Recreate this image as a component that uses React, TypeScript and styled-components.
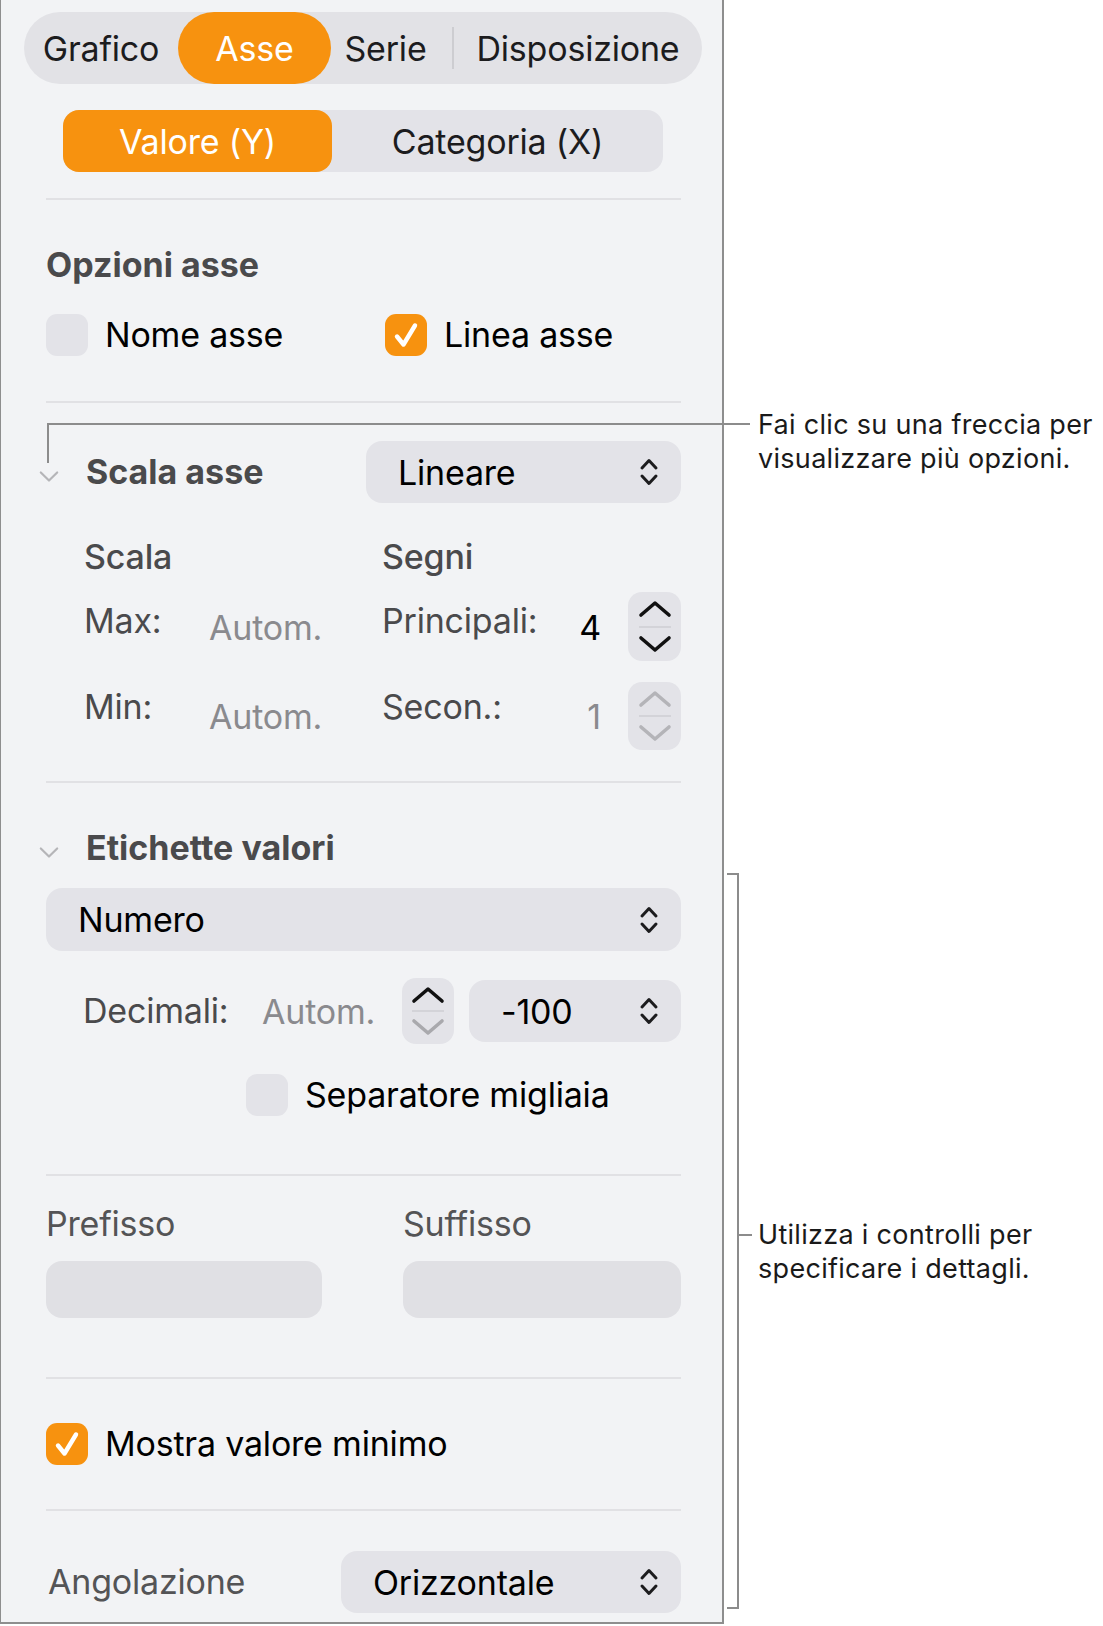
import React from "react";
import styled, { createGlobalStyle } from "styled-components";

const Global = createGlobalStyle`
  html, body { margin: 0; padding: 0; background: #ffffff; }
  body {
    font-family: Inter, "Noto Sans", sans-serif;
    -webkit-font-smoothing: antialiased;
  }
`;

const ORANGE = "#f7920f";
const CTRL = "#e3e3e8";

const Page = styled.div`
  position: relative;
  width: 1103px;
  height: 1626px;
  display: flex;
  align-items: flex-start;
`;

const Panel = styled.div`
  width: 724px;
  height: 1624px;
  box-sizing: border-box;
  background: #f2f3f5;
  border-left: 1px solid #8e8e8e;
  border-right: 2px solid #8e8e8e;
  border-bottom: 2px solid #8e8e8e;
  display: flex;
  flex-direction: column;
  color: #000;
  letter-spacing: -0.2px;
`;

const TabBar = styled.div`
  margin: 12px 20px 0 23px;
  height: 72px;
  border-radius: 36px;
  background: #e2e2e6;
  display: flex;
  align-items: center;
`;

const Tab = styled.div<{ $w: number; $active?: boolean; $shift?: number }>`
  flex: none;
  width: ${(p) => p.$w}px;
  height: 72px;
  box-sizing: border-box;
  padding-right: ${(p) => p.$shift ?? 0}px;
  display: flex;
  align-items: center;
  justify-content: center;
  border-radius: 36px;
  font-size: 34px;
  color: ${(p) => (p.$active ? "#ffffff" : "#1c1c1e")};
  background: ${(p) => (p.$active ? ORANGE : "transparent")};
`;

const TabSep = styled.div`
  flex: none;
  width: 2px;
  height: 42px;
  background: #cdcdd1;
`;

const Body = styled.div`
  padding: 0 41px 0 45px;
  display: flex;
  flex-direction: column;
`;

const Segmented = styled.div`
  margin: 26px 0 0 17px;
  width: 600px;
  height: 62px;
  border-radius: 16px;
  background: ${CTRL};
  display: flex;
`;

const Segment = styled.div<{ $w?: number; $active?: boolean }>`
  flex: ${(p) => (p.$w ? `none` : `1`)};
  width: ${(p) => (p.$w ? `${p.$w}px` : "auto")};
  display: flex;
  align-items: center;
  justify-content: center;
  border-radius: 16px;
  font-size: 34px;
  color: ${(p) => (p.$active ? "#ffffff" : "#1c1c1e")};
  background: ${(p) => (p.$active ? ORANGE : "transparent")};
`;

const Divider = styled.div<{ $mt: number }>`
  margin-top: ${(p) => p.$mt}px;
  height: 2px;
  background: #e1e1e4;
`;

const SectionTitle = styled.div<{ $mt?: number }>`
  margin-top: ${(p) => p.$mt ?? 0}px;
  font-size: 34px;
  line-height: 40px;
  font-weight: 700;
  color: #4a4a4c;
  letter-spacing: 0;
`;

const CheckRow = styled.div<{ $mt: number; $indent?: number; $single?: boolean }>`
  margin-top: ${(p) => p.$mt}px;
  padding-left: ${(p) => p.$indent ?? 0}px;
  height: 42px;
  display: grid;
  grid-template-columns: ${(p) => (p.$single ? "1fr" : "339px 1fr")};
  align-items: center;
`;

const CheckItem = styled.div`
  display: flex;
  align-items: center;
  white-space: nowrap;
`;

const Box = styled.div<{ $on?: boolean }>`
  flex: none;
  width: 42px;
  height: 42px;
  border-radius: 11px;
  background: ${(p) => (p.$on ? ORANGE : CTRL)};
  display: flex;
  align-items: center;
  justify-content: center;
`;

const CheckLabel = styled.span`
  margin-left: 17px;
  font-size: 34px;
  line-height: 42px;
  color: #000;
`;

const DisclosureRow = styled.div<{ $mt: number; $h: number }>`
  margin-top: ${(p) => p.$mt}px;
  height: ${(p) => p.$h}px;
  display: flex;
  align-items: center;
`;

const Disclosure = styled.div`
  flex: none;
  width: 20px;
  margin-left: -7px;
  margin-right: 27px;
  display: flex;
  align-items: center;
  justify-content: center;
  margin-top: 8px;
`;

const Popup = styled.div<{ $w?: number; $h?: number; $ml?: string; $mt?: number; $block?: boolean }>`
  box-sizing: border-box;
  flex: ${(p) => (p.$w || p.$block ? "none" : "1")};
  width: ${(p) => (p.$w ? `${p.$w}px` : "auto")};
  height: ${(p) => p.$h ?? 62}px;
  margin-left: ${(p) => p.$ml ?? "0"};
  margin-top: ${(p) => p.$mt ?? 0}px;
  padding: 0 22px 0 32px;
  border-radius: 16px;
  background: ${CTRL};
  display: flex;
  align-items: center;
  justify-content: space-between;
  font-size: 34px;
  color: #000;
`;

const SubHeaders = styled.div<{ $mt: number }>`
  margin-top: ${(p) => p.$mt}px;
  padding-left: 38px;
  display: grid;
  grid-template-columns: 298px 1fr;
  font-size: 34px;
  line-height: 40px;
  font-weight: 500;
  color: #4a4a4c;
`;

const ValueRow = styled.div<{ $mt: number; $h: number; $indent?: number }>`
  margin-top: ${(p) => p.$mt}px;
  height: ${(p) => p.$h}px;
  padding-left: ${(p) => p.$indent ?? 38}px;
  display: flex;
  align-items: center;
`;

const Group = styled.div<{ $w?: number }>`
  flex: ${(p) => (p.$w ? "none" : "1")};
  width: ${(p) => (p.$w ? `${p.$w}px` : "auto")};
  height: 100%;
  display: flex;
  align-items: center;
`;

const FieldLabel = styled.span<{ $w?: number; $lift?: number }>`
  flex: none;
  width: ${(p) => (p.$w ? `${p.$w}px` : "auto")};
  margin-bottom: ${(p) => p.$lift ?? 12}px;
  font-size: 34px;
  line-height: 40px;
  color: #4a4a4c;
  white-space: nowrap;
`;

const Value = styled.span<{ $muted?: boolean; $right?: boolean; $w?: number }>`
  flex: ${(p) => (p.$w ? "none" : "1")};
  width: ${(p) => (p.$w ? `${p.$w}px` : "auto")};
  text-align: ${(p) => (p.$right ? "right" : "left")};
  padding-right: ${(p) => (p.$right ? "27px" : "0")};
  margin-top: 2px;
  font-size: 34px;
  line-height: 40px;
  color: ${(p) => (p.$muted ? "#8a8a8e" : "#000")};
  white-space: nowrap;
`;

const Stepper = styled.div<{ $h: number; $w?: number }>`
  flex: none;
  position: relative;
  width: ${(p) => p.$w ?? 53}px;
  height: ${(p) => p.$h}px;
  border-radius: 14px;
  background: ${CTRL};
  display: flex;
  flex-direction: column;
  align-items: center;
  justify-content: space-between;
  padding: 8px 0;
  box-sizing: border-box;
`;

const StepDivider = styled.div`
  width: 32px;
  height: 2px;
  background: #d3d3d8;
`;

const LabeledGrid = styled.div<{ $mt: number }>`
  margin-top: ${(p) => p.$mt}px;
  display: grid;
  grid-template-columns: 276px 278px;
  column-gap: 81px;
`;

const Stack = styled.div`
  display: flex;
  flex-direction: column;
`;

const PlainLabel = styled.div`
  font-size: 34px;
  line-height: 40px;
  color: #545456;
`;

const TextField = styled.div`
  margin-top: 17px;
  height: 57px;
  border-radius: 16px;
  background: #e0e0e4;
`;

const BottomRow = styled.div<{ $mt: number }>`
  margin-top: ${(p) => p.$mt}px;
  height: 62px;
  display: flex;
  align-items: center;
  padding-left: 2px;
`;

/* ---- callouts (overlay) ---- */
const LeaderH = styled.div`
  position: absolute;
  left: 47px;
  top: 423px;
  width: 703px;
  height: 2px;
  background: #8c8c8c;
`;

const LeaderV = styled.div`
  position: absolute;
  left: 47px;
  top: 423px;
  width: 2px;
  height: 40px;
  background: #8c8c8c;
`;

const Bracket = styled.div`
  position: absolute;
  left: 727px;
  top: 873px;
  width: 10px;
  height: 732px;
  border: 2px solid #8c8c8c;
  border-left: none;
`;

const BracketTick = styled.div`
  position: absolute;
  left: 738px;
  top: 1234px;
  width: 14px;
  height: 2px;
  background: #8c8c8c;
`;

const CalloutText = styled.div<{ $top: number }>`
  position: absolute;
  left: 758px;
  top: ${(p) => p.$top}px;
  font-family: Inter, "Liberation Sans", sans-serif;
  font-size: 27px;
  letter-spacing: 0.3px;
  line-height: 34px;
  color: #1a1a1a;
  white-space: nowrap;
`;

/* ---- icons ---- */
const UpDown = () => (
  <svg width="20" height="32" viewBox="0 0 20 32" fill="none">
    <path d="M3 12 L10 4.5 L17 12" stroke="#1c1c1e" strokeWidth="3" strokeLinecap="round" strokeLinejoin="round" />
    <path d="M3 20 L10 27.5 L17 20" stroke="#1c1c1e" strokeWidth="3" strokeLinecap="round" strokeLinejoin="round" />
  </svg>
);

const Chev = ({ up, color }: { up?: boolean; color: string }) => (
  <svg width="34" height="18" viewBox="0 0 34 18" fill="none">
    <path
      d={up ? "M3 15 L17 3 L31 15" : "M3 3 L17 15 L31 3"}
      stroke={color}
      strokeWidth="3.6"
      strokeLinecap="round"
      strokeLinejoin="round"
    />
  </svg>
);

const DisclosureChevron = () => (
  <svg width="22" height="13" viewBox="0 0 22 13" fill="none">
    <path d="M2 2 L11 11 L20 2" stroke="#b5b5b8" strokeWidth="2.4" strokeLinecap="round" strokeLinejoin="round" />
  </svg>
);

const Checkmark = () => (
  <svg width="42" height="42" viewBox="0 0 42 42" fill="none">
    <path d="M12 22.5 L18.5 30.5 L30 11.5" stroke="#ffffff" strokeWidth="4.4" strokeLinecap="round" strokeLinejoin="round" />
  </svg>
);

const StepperControl = ({
  h,
  w,
  upColor,
  downColor,
}: {
  h: number;
  w?: number;
  upColor: string;
  downColor: string;
}) => (
  <Stepper $h={h} $w={w}>
    <Chev up color={upColor} />
    <StepDivider />
    <Chev color={downColor} />
  </Stepper>
);

export default function App() {
  return (
    <>
      <Global />
      <Page>
        <Panel>
          <TabBar>
            <Tab $w={154}>Grafico</Tab>
            <Tab $w={153} $active>
              Asse
            </Tab>
            <Tab $w={121} $shift={12}>
              Serie
            </Tab>
            <TabSep />
            <Tab $w={248}>Disposizione</Tab>
          </TabBar>

          <Body>
            <Segmented>
              <Segment $w={269} $active>
                Valore (Y)
              </Segment>
              <Segment>Categoria (X)</Segment>
            </Segmented>

            <Divider $mt={26} />

            <SectionTitle $mt={45}>Opzioni asse</SectionTitle>
            <CheckRow $mt={29}>
              <CheckItem>
                <Box />
                <CheckLabel>Nome asse</CheckLabel>
              </CheckItem>
              <CheckItem>
                <Box $on>
                  <Checkmark />
                </Box>
                <CheckLabel>Linea asse</CheckLabel>
              </CheckItem>
            </CheckRow>

            <Divider $mt={45} />

            <DisclosureRow $mt={38} $h={62}>
              <Disclosure>
                <DisclosureChevron />
              </Disclosure>
              <SectionTitle>Scala asse</SectionTitle>
              <Popup $w={315} $ml="auto">
                <span>Lineare</span>
                <UpDown />
              </Popup>
            </DisclosureRow>

            <SubHeaders $mt={34}>
              <span>Scala</span>
              <span>Segni</span>
            </SubHeaders>

            <ValueRow $mt={15} $h={69}>
              <Group $w={298}>
                <FieldLabel $w={125}>Max:</FieldLabel>
                <Value $muted>Autom.</Value>
              </Group>
              <Group>
                <FieldLabel>Principali:</FieldLabel>
                <Value $right>4</Value>
                <StepperControl h={69} upColor="#111" downColor="#111" />
              </Group>
            </ValueRow>

            <ValueRow $mt={21} $h={68}>
              <Group $w={298}>
                <FieldLabel $w={125} $lift={18}>Min:</FieldLabel>
                <Value $muted>Autom.</Value>
              </Group>
              <Group>
                <FieldLabel $lift={18}>Secon.:</FieldLabel>
                <Value $right $muted>
                  1
                </Value>
                <StepperControl h={68} upColor="#b4b4b8" downColor="#b4b4b8" />
              </Group>
            </ValueRow>

            <Divider $mt={31} />

            <DisclosureRow $mt={45} $h={40}>
              <Disclosure>
                <DisclosureChevron />
              </Disclosure>
              <SectionTitle>Etichette valori</SectionTitle>
            </DisclosureRow>

            <Popup $h={63} $mt={20} $block>
              <span>Numero</span>
              <UpDown />
            </Popup>

            <ValueRow $mt={27} $h={66} $indent={37}>
              <FieldLabel $w={179} $lift={0}>
                Decimali:
              </FieldLabel>
              <Value $muted $w={140}>
                Autom.
              </Value>
              <StepperControl h={66} w={52} upColor="#111" downColor="#a9a9ad" />
              <Popup $h={62} $ml="15px">
                <span>-100</span>
                <UpDown />
              </Popup>
            </ValueRow>

            <CheckRow $mt={30} $indent={200} $single>
              <CheckItem>
                <Box />
                <CheckLabel>Separatore migliaia</CheckLabel>
              </CheckItem>
            </CheckRow>

            <Divider $mt={58} />

            <LabeledGrid $mt={28}>
              <Stack>
                <PlainLabel>Prefisso</PlainLabel>
                <TextField />
              </Stack>
              <Stack>
                <PlainLabel>Suffisso</PlainLabel>
                <TextField />
              </Stack>
            </LabeledGrid>

            <Divider $mt={59} />

            <CheckRow $mt={44} $single>
              <CheckItem>
                <Box $on>
                  <Checkmark />
                </Box>
                <CheckLabel>Mostra valore minimo</CheckLabel>
              </CheckItem>
            </CheckRow>

            <Divider $mt={44} />

            <BottomRow $mt={40}>
              <PlainLabel>Angolazione</PlainLabel>
              <Popup $w={340} $ml="auto">
                <span>Orizzontale</span>
                <UpDown />
              </Popup>
            </BottomRow>
          </Body>
        </Panel>

        <LeaderH />
        <LeaderV />
        <CalloutText $top={408}>
          Fai clic su una freccia per
          <br />
          visualizzare più opzioni.
        </CalloutText>

        <Bracket />
        <BracketTick />
        <CalloutText $top={1218}>
          Utilizza i controlli per
          <br />
          specificare i dettagli.
        </CalloutText>
      </Page>
    </>
  );
}
